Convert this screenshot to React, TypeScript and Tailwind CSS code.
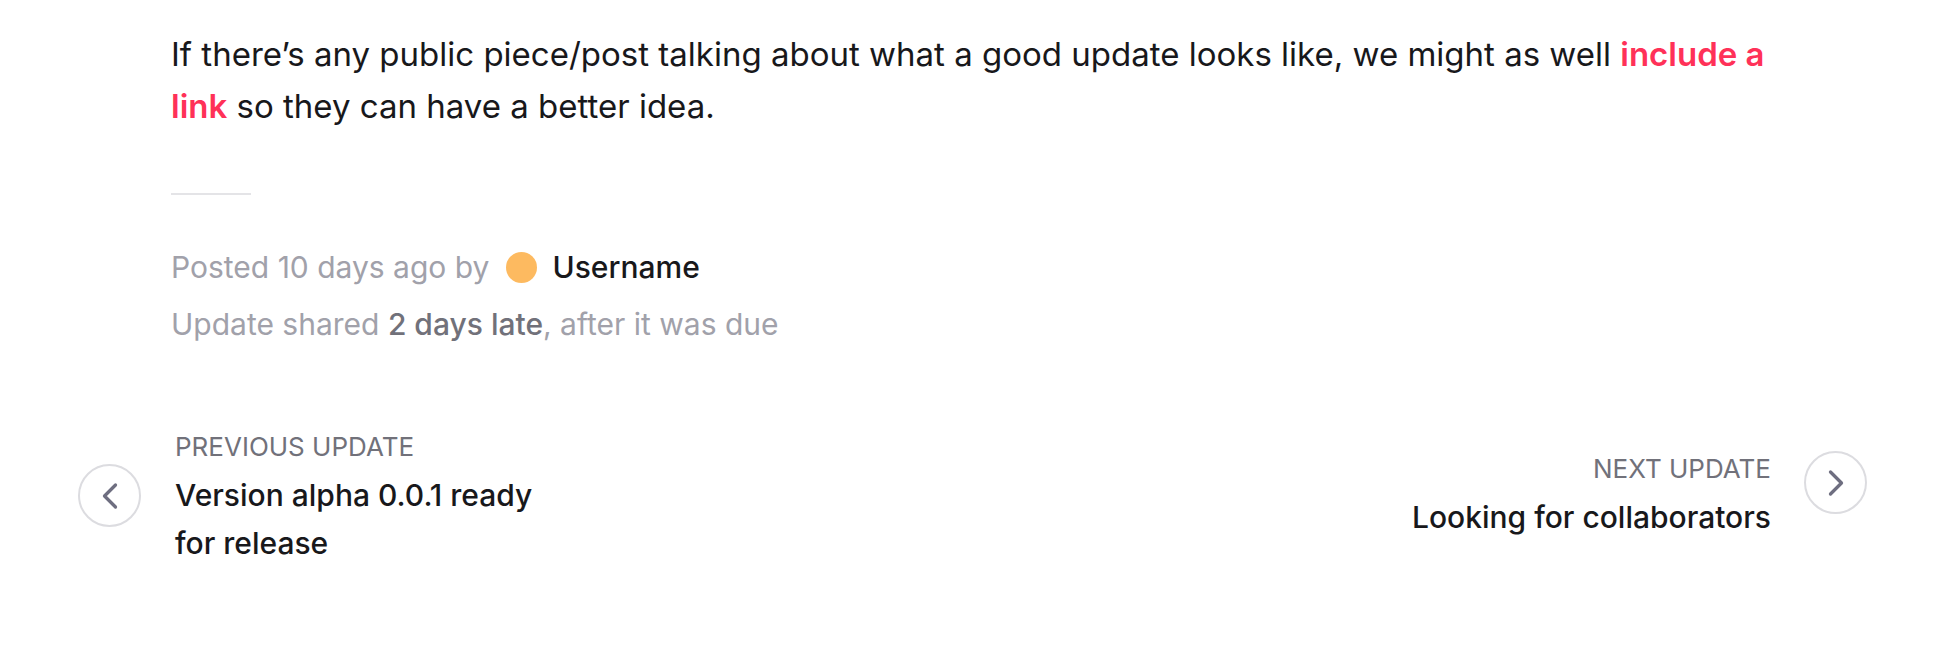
import { ChevronLeft, ChevronRight } from "lucide-react";

export default function App() {
  return (
    <div className="min-h-screen bg-white pl-[171px]" style={{ fontFamily: "Inter, 'Noto Sans', sans-serif" }}>
      <div className="w-[1600px] pt-[28px]">
        {/* body text */}
        <p className="text-[33px] leading-[52px] text-[#18181b]">
          If there’s any public piece/post talking about what a good update looks like, we might as well{" "}
          <a href="#" className="font-semibold text-[#ff3158]">
            include a link
          </a>{" "}
          so they can have a better idea.
        </p>

        <div className="mt-[61px] h-[2px] w-[80px] bg-[#e4e4e7]" />

        {/* meta */}
        <div className="mt-[44px] text-[30px] leading-[57px] text-[#a1a1aa]">
          <div className="flex items-center">
            <span>Posted 10 days ago by</span>
            <span className="ml-[17px] h-[31px] w-[31px] rounded-full bg-[#fdba60]" />
            <span className="ml-[15px] font-medium text-[#18181b]">Username</span>
          </div>
          <div>
            Update shared <span className="font-medium text-[#71717a]">2 days late</span>, after it was due
          </div>
        </div>

        {/* prev / next */}
        <div className="-ml-[93px] -mr-[96px] mt-[75px] flex items-start justify-between">
          <a href="#" className="flex items-start gap-[34px]">
            <span className="mt-[36px] flex h-[63px] w-[63px] shrink-0 items-center justify-center rounded-full border-2 border-[#dcdce0] text-[#6e6e80]">
              <ChevronLeft size={44} strokeWidth={1.8} />
            </span>
            <span className="block w-[380px]">
              <span className="block text-[26px] leading-[38px] text-[#71717a]">PREVIOUS UPDATE</span>
              <span className="mt-[5px] block text-[30px] font-medium leading-[48px] text-[#18181b]">
                Version alpha 0.0.1 ready for release
              </span>
            </span>
          </a>

          <a href="#" className="mt-[22px] flex items-start gap-[33px]">
            <span className="block text-right">
              <span className="block text-[26px] leading-[38px] text-[#71717a]">NEXT UPDATE</span>
              <span className="mt-[5px] block text-[30px] font-medium leading-[48px] text-[#18181b]">
                Looking for collaborators
              </span>
            </span>
            <span className="mt-[1px] flex h-[63px] w-[63px] shrink-0 items-center justify-center rounded-full border-2 border-[#dcdce0] text-[#6e6e80]">
              <ChevronRight size={44} strokeWidth={1.8} />
            </span>
          </a>
        </div>
      </div>
    </div>
  );
}
